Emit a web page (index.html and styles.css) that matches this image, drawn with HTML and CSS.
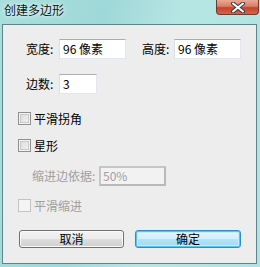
FILE: index.html
```html
<!DOCTYPE html>
<html>
<head>
<meta charset="utf-8">
<link rel="stylesheet" href="styles.css">
</head>
<body>
<div class="window">
  <div class="titlebar">
    <span class="title">创建多边形</span>
    <span class="close"><svg width="16" height="11" viewBox="0 0 16 11"><path d="M3 1.5 L13 9.5 M13 1.5 L3 9.5" stroke="#3c3c48" stroke-width="4" stroke-linecap="round"/><path d="M3 1.5 L13 9.5 M13 1.5 L3 9.5" stroke="#ffffff" stroke-width="2" stroke-linecap="round"/></svg></span>
  </div>
  <div class="client">
    <div class="row row-size">
      <span class="label lw1">宽度:</span>
      <span class="input w67">96 像素</span>
      <span class="label lw2">高度:</span>
      <span class="input w67">96 像素</span>
    </div>
    <div class="row row-sides">
      <span class="label lw1">边数:</span>
      <span class="input w38">3</span>
    </div>
    <div class="check check-smooth">
      <span class="box"></span><span class="ctext">平滑拐角</span>
    </div>
    <div class="check check-star">
      <span class="box"></span><span class="ctext">星形</span>
    </div>
    <div class="row row-indent">
      <span class="label lw3 disabled">缩进边依据:</span>
      <span class="input w67 input-disabled">50%</span>
    </div>
    <div class="check check-indent">
      <span class="box box-disabled"></span><span class="ctext disabled">平滑缩进</span>
    </div>
    <div class="buttons">
      <span class="btn">取消</span>
      <span class="btn btn-default">确定</span>
    </div>
  </div>
</div>
</body>
</html>
```
FILE: styles.css
```css
html, body {
  margin: 0;
  padding: 0;
}
body {
  width: 260px;
  height: 267px;
  overflow: hidden;
  font-family: "Noto Sans CJK SC", "Liberation Sans", sans-serif;
  font-size: 12px;
  color: #000;
}
.window {
  width: 260px;
  height: 267px;
  box-sizing: border-box;
  padding: 0 3px 3px 2px;
  background: linear-gradient(100deg, #a9dedd 0%, #9fd8d8 35%, #b6e6e4 60%, #b0e3e1 100%);
  display: flex;
  flex-direction: column;
}
.titlebar {
  height: 24px;
  display: flex;
  align-items: flex-start;
  justify-content: space-between;
  flex: none;
}
.title {
  margin-left: 2px;
  margin-top: 3px;
  line-height: 14px;
  font-size: 12px;
  color: #101010;
  text-shadow: 0 0 6px #e6ffff, 0 0 3px #e6ffff;
}
.close {
  width: 43px;
  height: 15px;
  margin-right: -2px;
  box-sizing: border-box;
  border: 1px solid #6d3a32;
  border-top: none;
  border-radius: 0 0 4px 4px;
  background: linear-gradient(#e9a996 0%, #d97e66 45%, #c5442a 55%, #d3654a 100%);
  display: flex;
  align-items: center;
  justify-content: center;
}
.close svg {
  display: block;
}
.client {
  flex: 1;
  background: #ededed;
  border: 1px solid #5f8588;
  display: flex;
  flex-direction: column;
}
.row {
  display: flex;
  align-items: center;
  height: 20px;
  padding-left: 23px;
}
.row-size { margin-top: 14px; }
.row-sides { margin-top: 15px; }
.row-indent { margin-top: 14px; padding-left: 29px; }
.label {
  line-height: 20px;
  white-space: nowrap;
}
.lw1 { width: 33px; }
.lw2 { width: 32px; margin-left: 16px; }
.lw3 { width: 67px; }
.disabled { color: #a0a0a0; }
.input {
  height: 20px;
  box-sizing: border-box;
  background: #fff;
  border: 1px solid #e2e7ee;
  border-top-color: #abadb3;
  border-left-color: #dbdfe6;
  padding-left: 3px;
  line-height: 18px;
  white-space: nowrap;
}
.w67 { width: 67px; }
.w38 { width: 38px; }
.input-disabled {
  background: #f2f2f2;
  border: 2px solid #c6c6c6;
  border-right-color: #b9b9b9;
  border-bottom-color: #b9b9b9;
  color: #a0a0a0;
  padding-left: 2px;
  line-height: 16px;
}
.check {
  display: flex;
  align-items: center;
  height: 13px;
  padding-left: 15px;
}
.check-smooth { margin-top: 18px; }
.check-star { margin-top: 14px; }
.check-indent { margin-top: 13px; }
.box {
  width: 13px;
  height: 13px;
  box-sizing: border-box;
  border: 1px solid #8f8f8f;
  background: #fff;
  box-shadow: inset 0 0 0 1px #f4f4f4, inset 0 0 0 2px #c8c8c8;
  background: linear-gradient(135deg, #d8d8d8, #f6f6f6);
}
.box-disabled {
  border-color: #c4c4c4;
  background: #f4f4f4;
  box-shadow: none;
}
.ctext {
  margin-left: 3px;
  line-height: 13px;
}
.buttons {
  display: flex;
  margin-top: 18px;
  padding-left: 16px;
  gap: 11px;
}
.btn {
  width: 105px;
  height: 18px;
  box-sizing: border-box;
  border: 1px solid #707070;
  border-radius: 3px;
  background: linear-gradient(#f3f3f3 0%, #ebebeb 48%, #dddddd 52%, #cfcfcf 100%);
  box-shadow: inset 0 0 0 1px #fbfbfb;
  text-align: center;
  line-height: 16px;
}
.btn-default {
  width: 106px;
  border: 1px solid #2a8fd0;
  background: linear-gradient(#e6f6fd 0%, #d2eefc 48%, #b4e2fa 52%, #a3d8f4 100%);
  box-shadow: inset 0 0 0 1px #4fc6f3, inset 0 0 0 2px #c8ecfc;
}
```
